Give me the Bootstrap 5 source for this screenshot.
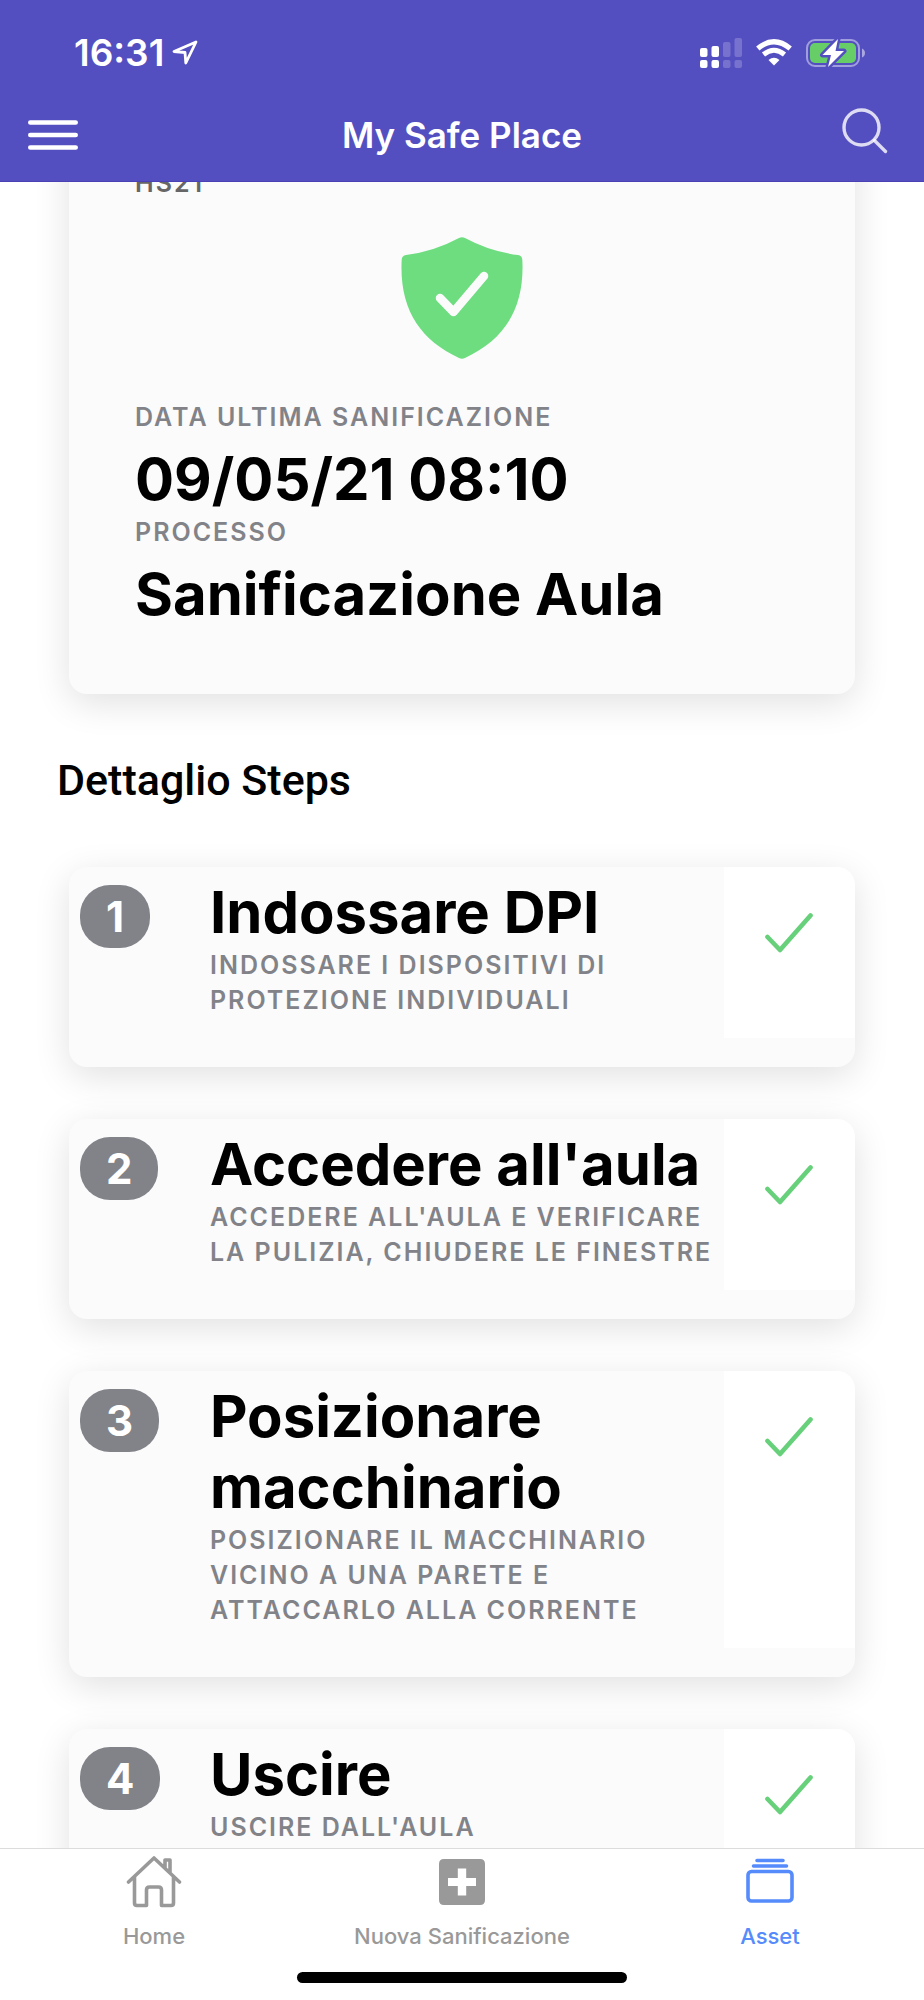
<!DOCTYPE html>
<html lang="it">
<head>
<meta charset="utf-8">
<meta name="viewport" content="width=device-width, initial-scale=1">
<title>My Safe Place</title>
<link href="https://cdn.jsdelivr.net/npm/bootstrap@5.3.0/dist/css/bootstrap.min.css" rel="stylesheet">
<style>
  body { font-family: Inter, "Liberation Sans", sans-serif; color: #000; background: #fff; }
  svg { display: block; }
  .app-header { background: #544fc1; border-bottom: 1px solid #4a42b4; z-index: 2; }
  .status-bar { height: 105px; padding: 0 59px 0 74px; }
  .status-icons { gap: 14px; }
  .clock { font-size: 37px; line-height: 40px; font-weight: 600; }
  .title-bar { height: 76px; padding: 0 28px 16px; }
  .title-bar h1 { font-size: 35px; line-height: 44px; font-weight: 600; }
  .icon-btn { background: none; border: 0; padding: 0; color: #fff; }
  .side { flex: 1 1 0; }
  .feed { min-height: 0; padding: 0 69px; }
  .panel { --bs-card-border-width: 0; --bs-card-bg: #fbfbfb; --bs-card-border-radius: 18px; --bs-card-color: #000;
    box-shadow: 0 9px 36px rgba(0, 0, 0, .12); flex: none; }
  .summary { margin-top: -50px; padding: 34px 66px 64px; }
  .summary .shield { margin: 36px auto 41px; }
  .label { font-size: 25px; line-height: 35px; font-weight: 600; letter-spacing: 2px; text-transform: uppercase; color: #828389; margin: 0; }
  .summary .label { margin-bottom: 9px; }
  .summary .room { color: #666; margin: 0; }
  .value { font-size: 58px; line-height: 71px; font-weight: 700; margin: 0; }
  .section-title { font-family: Roboto, sans-serif; font-size: 43px; line-height: 50px; font-weight: 500; margin: 61px 0 62px -12px; }
  .step { margin-bottom: 52px; padding-bottom: 29px; overflow: hidden; }
  .step-num { display: inline-block; margin: 18px 0 0 11px; padding: 0 26px; height: 63px; border-radius: 30px; background: #828389; color: #fff;
    font-size: 42px; line-height: 63px; font-weight: 700; }
  .step-text { padding: 10px 0 20px 10px; }
  .step-state { background: #fff; padding-top: 46px; }
  .step-state svg { margin: 0 auto; }
  .tabs { border-top: 1px solid #dcdcdc; background: #fff; z-index: 2; }
  .tabs a { color: #999; text-decoration: none; font-size: 22px; line-height: 28px; font-weight: 500; padding-top: 6px; }
  .tabs a svg { margin: 0 auto 13px; }
  .tabs a.active { color: #568bfb; }
  .home-bar { width: 330px; height: 11px; border-radius: 6px; background: #000; margin: 22px auto 17px; }
</style>
</head>
<body>
<svg class="d-none" aria-hidden="true">
  <symbol id="tick" viewBox="0 0 48 40"><path d="M2.5 24 15 37 45.500 2.500" fill="none" stroke="#67d07a" stroke-width="4.600" stroke-linecap="round" stroke-linejoin="round"/></symbol>
</svg>
<div class="d-flex flex-column vh-100 overflow-hidden">
  <header class="app-header position-relative text-white">
    <div class="status-bar d-flex align-items-center justify-content-between">
      <div class="d-flex align-items-center gap-2">
        <span class="clock">16:31</span>
        <svg width="26" height="26" viewBox="0 0 26 26"><path d="M24 2 2 11.500l11 1 .8 10.500Z" fill="none" stroke="#fff" stroke-width="2.800" stroke-linejoin="round"/></svg>
      </div>
      <div class="status-icons d-flex align-items-center">
        <svg width="42" height="30" viewBox="0 0 42 30" fill="#fff"><g><rect y="10" width="7.500" height="9" rx="2"/><rect y="22" width="7.500" height="8" rx="2"/><rect x="11.500" y="8" width="7.500" height="11" rx="2"/><rect x="11.500" y="22" width="7.500" height="8" rx="2"/></g><g opacity=".2"><rect x="23" y="4" width="7.500" height="15" rx="2"/><rect x="23" y="22" width="7.500" height="8" rx="2"/><rect x="34.500" y="0" width="7.500" height="19" rx="2"/><rect x="34.500" y="22" width="7.500" height="8" rx="2"/></g></svg>
        <svg width="36" height="27" viewBox="0 0 36 27" fill="none" stroke="#fff"><path d="M1.800 9.500Q18-4 34.200 9.500" stroke-width="5.200"/><path d="M7.500 15.500Q18 7 28.500 15.500" stroke-width="5"/><path d="M18 26.500 12.500 21Q18 16.500 23.500 21Z" fill="#fff" stroke="none"/></svg>
        <svg width="59" height="30" viewBox="0 0 59 30"><rect x="1" y="2" width="52" height="26" rx="8" fill="none" stroke="#fff" stroke-opacity=".45" stroke-width="2"/><path d="M56 10.500q3 1.500 3 4.500t-3 4.500Z" fill="#fff" fill-opacity=".5"/><rect x="4" y="5" width="46" height="20" rx="5" fill="#67ce67"/><path d="M32 1 16.500 17h8.500l-3 12L38 13h-8.500Z" fill="#fff" stroke="#544fc1" stroke-width="5" stroke-linejoin="round" paint-order="stroke"/></svg>
      </div>
    </div>
    <div class="title-bar d-flex align-items-center">
      <div class="side d-flex"><button class="icon-btn" type="button" aria-label="Menu"><svg width="50" height="32" viewBox="0 0 50 32" stroke="#fff" stroke-width="4.600" stroke-linecap="round"><path d="M2.300 3.500h45.400M2.300 16h45.400M2.300 28.500h45.400"/></svg></button></div>
      <h1 class="m-0">My Safe Place</h1>
      <div class="side d-flex justify-content-end"><button class="icon-btn me-2 mb-2" type="button" aria-label="Cerca"><svg width="46" height="46" viewBox="0 0 46 46" fill="none" stroke="#fff" stroke-opacity=".8" stroke-width="3.400" stroke-linecap="round"><circle cx="19.500" cy="19.500" r="17.500"/><path d="m32.500 32.500 11 11"/></svg></button></div>
    </div>
  </header>

  <main class="feed d-flex flex-column flex-grow-1 overflow-hidden">
    <section class="card panel summary">
      <p class="label room">HS21</p>
      <svg class="shield" width="122" height="122" viewBox="0 0 122 122"><path d="M58 1Q61-.7 64 1 89 14.500 117 18q4 .6 4.300 4.500C124 72 103 103 64 121q-3 1.500-6 0C19 103-2 72 .7 22.500Q1 18.600 5 18 33 14.500 58 1Z" fill="#6ddd80"/><path d="m39 61 13.500 14L83 39" fill="none" stroke="#fbfbfb" stroke-width="8.500" stroke-linecap="round" stroke-linejoin="round"/></svg>
      <p class="label">Data ultima sanificazione</p>
      <p class="value">09/05/21 08:10</p>
      <p class="label">Processo</p>
      <p class="value">Sanificazione Aula</p>
    </section>

    <h2 class="section-title">Dettaglio Steps</h2>

    <article class="card panel step">
      <div class="row g-0">
        <div class="col-2"><span class="step-num">1</span></div>
        <div class="col-8 step-text"><h3 class="value">Indossare DPI</h3><p class="label">Indossare i dispositivi di protezione individuali</p></div>
        <div class="col-2 step-state"><svg width="48" height="40"><use href="#tick"/></svg></div>
      </div>
    </article>
    <article class="card panel step">
      <div class="row g-0">
        <div class="col-2"><span class="step-num">2</span></div>
        <div class="col-8 step-text"><h3 class="value">Accedere all'aula</h3><p class="label">Accedere all'aula e verificare la pulizia, chiudere le finestre</p></div>
        <div class="col-2 step-state"><svg width="48" height="40"><use href="#tick"/></svg></div>
      </div>
    </article>
    <article class="card panel step">
      <div class="row g-0">
        <div class="col-2"><span class="step-num">3</span></div>
        <div class="col-8 step-text"><h3 class="value">Posizionare macchinario</h3><p class="label">Posizionare il macchinario vicino a una parete e attaccarlo alla corrente</p></div>
        <div class="col-2 step-state"><svg width="48" height="40"><use href="#tick"/></svg></div>
      </div>
    </article>
    <article class="card panel step">
      <div class="row g-0">
        <div class="col-2"><span class="step-num">4</span></div>
        <div class="col-8 step-text"><h3 class="value">Uscire</h3><p class="label">Uscire dall'aula</p></div>
        <div class="col-2 step-state"><svg width="48" height="40"><use href="#tick"/></svg></div>
      </div>
    </article>
  </main>

  <footer class="tabs position-relative">
    <nav class="row g-0 text-center">
      <a class="col-4" href="#home"><svg width="56" height="54" viewBox="0 0 56 54" fill="none" stroke="#999" stroke-width="3.600" stroke-linecap="round" stroke-linejoin="round"><path d="M2.500 27 28 3l25.500 24M8.500 22v26q0 2.500 2.500 2.500h9.500V35q0-3 3-3h9q3 0 3 3v15.500H45q2.500 0 2.500-2.500V22M39 13V5h5v13"/></svg>Home</a>
      <a class="col-4" href="#nuova"><svg width="56" height="54" viewBox="0 0 56 54"><path d="M10 4h36q5 0 5 5v36q0 5-5 5H10q-5 0-5-5V9q0-5 5-5Zm13.800 9.500v9.500H14v8h9.800v9.500h8.400V31H42v-8h-9.800v-9.500Z" fill="#999" fill-rule="evenodd"/></svg>Nuova Sanificazione</a>
      <a class="col-4 active" aria-current="page" href="#asset"><svg width="56" height="54" viewBox="0 0 56 54" fill="none" stroke="#568bfb" stroke-width="3.600" stroke-linecap="round"><path d="M15 5.500h26M11.500 11h33"/><rect x="6" y="16.500" width="44" height="29.500" rx="3.500"/></svg>Asset</a>
    </nav>
    <div class="home-bar"></div>
  </footer>
</div>
<script src="https://cdn.jsdelivr.net/npm/bootstrap@5.3.0/dist/js/bootstrap.bundle.min.js"></script>
</body>
</html>
